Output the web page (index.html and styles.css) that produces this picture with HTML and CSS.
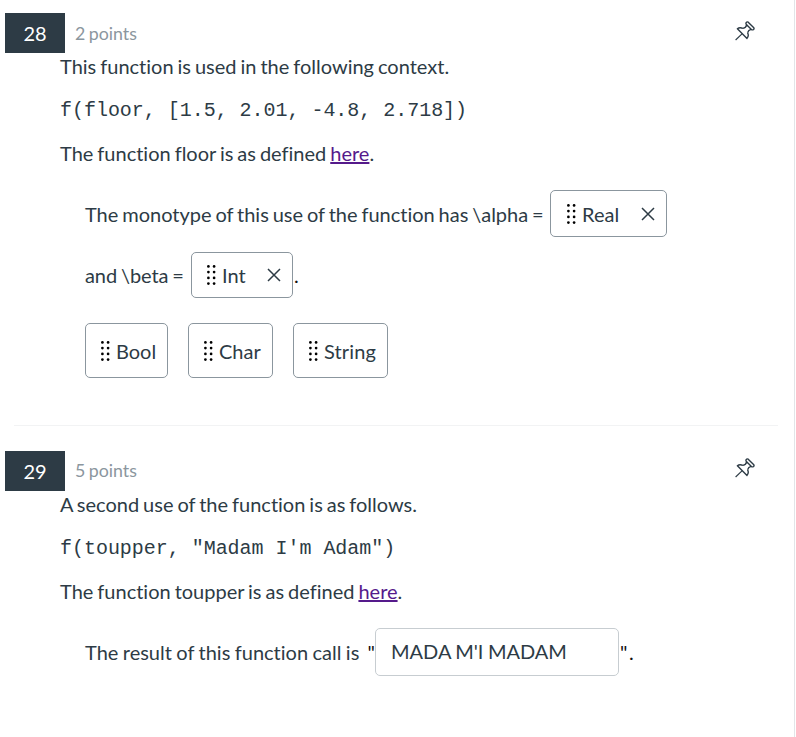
FILE: index.html
```html
<!DOCTYPE html>
<html lang="en">
<head>
<meta charset="utf-8">
<title>Quiz</title>
<link rel="stylesheet" href="styles.css">
</head>
<body>
<svg class="defs" aria-hidden="true">
  <symbol id="pin" viewBox="0 0 20 20"><path d="M11.2 1.6Q12 .4 13.2 1.2L18.8 6.8Q19.4 8 18.4 8.6Q17.2 9.2 16.4 8.4L11.4 3.4Q10.6 2.6 11.2 1.6ZM11.6 3.8Q11 6.6 8 7.4M16 8.4Q13.4 9 12.6 11.8M8 7.4Q4.6 5.8 2.4 7.8L12 17.4Q14.2 15 12.6 11.8"/><path class="needle" d="M7 12.8.6 19"/></symbol>
  <symbol id="grip" viewBox="0 0 9 20"><circle cx="1.4" cy="1.4" r="1.35"/><circle cx="7.1" cy="1.4" r="1.35"/><circle cx="1.4" cy="7.1" r="1.35"/><circle cx="7.1" cy="7.1" r="1.35"/><circle cx="1.4" cy="12.9" r="1.35"/><circle cx="7.1" cy="12.9" r="1.35"/><circle cx="1.4" cy="18.6" r="1.35"/><circle cx="7.1" cy="18.6" r="1.35"/></symbol>
</svg>
<main class="quiz">
  <section class="question">
    <header class="head"><span class="number">28</span><span class="points">2 points</span><svg class="pin"><use href="#pin"/></svg></header>
    <div class="prompt">
      <p>This function is used in the following context.</p>
      <pre>f(floor, [1.5, 2.01, -4.8, 2.718])</pre>
      <p>The function floor is as defined <a href="#">here</a>.</p>
    </div>
    <div class="answer">
      <div class="line first"><span class="alpha">The monotype of this use of the function has \alpha =</span><span class="chip real"><svg class="grip"><use href="#grip"/></svg>Real<svg class="close" viewBox="0 0 14 14"><path d="M1 1 13 13M13 1 1 13"/></svg></span></div>
      <div class="line second"><span class="beta">and \beta =</span><span class="chip int"><svg class="grip"><use href="#grip"/></svg>Int<svg class="close" viewBox="0 0 14 14"><path d="M1 1 13 13M13 1 1 13"/></svg></span><span class="dot">.</span></div>
      <div class="bank"><span class="chip bool"><svg class="grip"><use href="#grip"/></svg>Bool</span><span class="chip char"><svg class="grip"><use href="#grip"/></svg>Char</span><span class="chip string"><svg class="grip"><use href="#grip"/></svg>String</span></div>
    </div>
  </section>
  <hr>
  <section class="question later">
    <header class="head"><span class="number">29</span><span class="points">5 points</span><svg class="pin"><use href="#pin"/></svg></header>
    <div class="prompt">
      <p>A second use of the function is as follows.</p>
      <pre>f(toupper, "Madam I'm Adam")</pre>
      <p>The function toupper is as defined <a href="#">here</a>.</p>
    </div>
    <div class="answer">
      <div class="line result"><span class="call"><span class="lead">The result of this function call is</span><span class="quote">"</span></span><input type="text" value="MADA M'I MADAM"><span class="after">" .</span></div>
    </div>
  </section>
</main>
</body>
</html>
```
FILE: styles.css
```css
* { box-sizing: border-box; }
body { margin: 0; background: #fff; color: #2d3b45; font: 20px/28px Lato, sans-serif; word-spacing: -1.15px; font-variant-ligatures: none; }
.defs { display: none; }
.quiz { width: 795px; height: 737px; border-right: 1px solid #e2e5e8; padding: 13px 16px 0 5px; overflow: hidden; }
.head { display: flex; height: 39px; }
.number { width: 60px; height: 40px; line-height: 41px; background: #2d3b45; color: #fff; text-align: center; }
.points { margin-left: 10px; line-height: 40px; font-size: 17.8px; color: #8b969e; }
.later .points { line-height: 39px; }
.pin { width: 20px; height: 20px; margin: 8px 23px 0 auto; fill: none; stroke: #2d3b45; stroke-width: 1.4; stroke-linejoin: round; }
.later .pin { margin-top: 7px; }
.needle { stroke-width: 1.1; }
.prompt { padding-left: 55px; }
p { margin: 0; white-space: nowrap; }
pre { margin: 17px 0 14px; font: 20px/28px "Liberation Mono", monospace; letter-spacing: -0.03px; word-spacing: 0; }
a { color: #551a8b; }
.answer { padding-left: 80px; }
.line { display: flex; align-items: center; white-space: nowrap; }
.first { margin-top: 23px; height: 47px; }
.second { margin-top: 15px; height: 46px; }
.chip { display: flex; align-items: center; height: 47px; border: 1px solid #8b969e; border-radius: 5px; padding-left: 16px; }
.alpha { width: 465px; letter-spacing: -0.02px; }
.beta { width: 106px; letter-spacing: -0.08px; }
.call { display: flex; justify-content: space-between; width: 290px; }
.lead { word-spacing: -0.7px; }
.real { width: 117px; }
.int { width: 102px; height: 46px; padding-left: 15px; }
.dot, .quote, .after { color: #111; }
.dot { margin-left: 1px; }
.grip { width: 9px; height: 20px; margin-right: 6px; fill: #000; }
.close { width: 14px; height: 14px; margin: 0 11px 0 auto; fill: none; stroke: #2d3b45; stroke-width: 1.5; }
.bank { display: flex; gap: 20px; margin-top: 25px; }
.bank .chip { height: 55px; padding-left: 15px; }
.bool { width: 83px; }
.char { width: 85px; }
.string { width: 95px; letter-spacing: 0.15px; }
hr { margin: 47px 0 25px 9px; border: 0; height: 1px; background: #f2f3f4; }
.result { margin-top: 23px; height: 48px; }
input { width: 244px; height: 48px; border: 1px solid #c7cdd1; border-radius: 5px; padding: 0 15px 2px; color: #2d3b45; font: 20px Lato, sans-serif; word-spacing: -0.7px; }
.after { margin-left: 1px; word-spacing: -3.5px; }
```
